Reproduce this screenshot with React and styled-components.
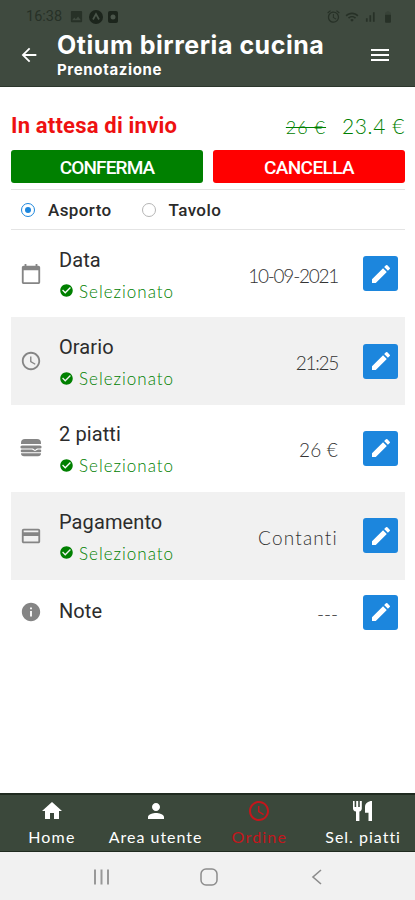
import React, { useState } from 'react';
import styled, { createGlobalStyle } from 'styled-components';
import {
  MdAccessTime,
  MdAlarm,
  MdArrowBack,
  MdBattery90,
  MdCalendarToday,
  MdCheckCircle,
  MdCreditCard,
  MdEdit,
  MdHome,
  MdImage,
  MdInfo,
  MdMenu,
  MdPerson,
  MdSignalCellularAlt,
  MdWifi,
} from 'react-icons/md';

const GlobalStyle = createGlobalStyle`
  * {
    box-sizing: border-box;
  }
  body {
    margin: 0;
    background: #fff;
    font-family: Lato, "Open Sans", sans-serif;
  }
  button {
    border: none;
    padding: 0;
    font-family: inherit;
    background: none;
  }
  svg {
    display: block;
    flex-shrink: 0;
  }
`;

const Screen = styled.div`
  display: flex;
  flex-direction: column;
  width: 100%;
  height: 900px;
  overflow: hidden;
  background: #fff;
`;

const Header = styled.header`
  height: 87px;
  background-color: #3f4a3f;
  border-bottom: 1px solid #2c372c;
`;

const StatusBar = styled.div`
  display: flex;
  align-items: center;
  justify-content: space-between;
  height: 31px;
  padding: 2px 20px 0 26px;
  color: #273127;
`;

const StatusGroup = styled.div`
  display: flex;
  align-items: center;
  gap: ${(props) => props.$gap}px;
`;

const Clock = styled.span`
  width: 38px;
  font-family: Roboto, sans-serif;
  font-size: 14.5px;
  line-height: 16px;
`;

const TitleBar = styled.div`
  display: flex;
  align-items: center;
  height: 48px;
  padding: 0 23px 0 18px;
  color: #fff;
`;

const Titles = styled.div`
  flex: 1;
  margin-left: 17px;
  font-family: Inter, sans-serif;
  font-weight: 700;
  white-space: nowrap;
`;

const Title = styled.div`
  font-size: 25px;
  line-height: 28px;
  letter-spacing: 0.53px;
`;

const Subtitle = styled.div`
  padding-top: 1px;
  font-size: 15px;
  line-height: 20px;
  letter-spacing: 0.65px;
`;

const Content = styled.main`
  flex: 1;
  padding: 25px 10px 0 11px;
`;

const Summary = styled.div`
  display: flex;
  align-items: center;
  justify-content: space-between;
  height: 28px;
  color: green;
`;

const Status = styled.div`
  font-family: Roboto, sans-serif;
  font-size: 22px;
  font-weight: 700;
  line-height: 28px;
  letter-spacing: 0.2px;
  color: #ee1111;
`;

const Prices = styled.div`
  display: flex;
  align-items: baseline;
  gap: 16px;
`;

const OldPrice = styled.span`
  font-size: 18px;
  font-weight: 300;
  letter-spacing: 1px;
  text-decoration: line-through;
`;

const Price = styled.span`
  font-size: 21px;
  font-weight: 300;
  line-height: 28px;
  letter-spacing: 0.6px;
`;

const Actions = styled.div`
  display: flex;
  gap: 10px;
  margin-top: 10px;
`;

const ActionButton = styled.button`
  flex: 1;
  height: 33px;
  border-radius: 3px;
  background-color: ${(props) => props.$color};
  color: #fff;
  font-family: Roboto, sans-serif;
  font-size: 19px;
  font-weight: 500;
  line-height: 35px;
  letter-spacing: ${(props) => props.$spacing}px;
`;

const Modes = styled.div`
  display: flex;
  align-items: center;
  height: 41px;
  margin-top: 6px;
  padding: 1px 0 0 10px;
  border-top: 1px solid #e4e4e4;
  border-bottom: 1px solid #e4e4e4;
`;

const Mode = styled.button`
  display: flex;
  align-items: center;
  gap: 13px;
  margin-right: 30px;
  color: #2a2a2a;
  font-family: Roboto, sans-serif;
  font-size: 17px;
  font-weight: 500;
  letter-spacing: 0.4px;
`;

const Radio = styled.span`
  display: flex;
  align-items: center;
  justify-content: center;
  width: 14px;
  height: 14px;
  border: 1.5px solid ${(props) => (props.$checked ? '#1c86dd' : '#b5b5b5')};
  border-radius: 50%;

  &::after {
    content: '';
    width: 6px;
    height: 6px;
    border-radius: 50%;
    background: ${(props) => (props.$checked ? '#1c86dd' : 'transparent')};
  }
`;

const Row = styled.div`
  display: flex;
  align-items: center;
  height: ${(props) => (props.$short ? 65 : 87.4)}px;
  padding: 0 7px 0 9px;
  background-color: ${(props) => (props.$shaded ? '#f1f1f1' : '#fff')};
  color: #858585;
`;

const RowText = styled.div`
  flex: 1;
  margin-left: 17px;
  padding-top: ${(props) => (props.$single ? 0 : 4)}px;
  padding-bottom: ${(props) => (props.$single ? 3 : 0)}px;
`;

const RowTitle = styled.div`
  font-family: Roboto, sans-serif;
  font-size: 20px;
  line-height: 28px;
  letter-spacing: 0.1px;
  color: #2c2c2c;
`;

const Selected = styled.div`
  display: flex;
  align-items: center;
  gap: 5px;
  margin-top: 4px;
  color: green;
  font-size: 17px;
  font-weight: 300;
  line-height: 28px;
  letter-spacing: 1px;

  svg {
    margin-bottom: 2px;
  }
`;

const Value = styled.div`
  margin-right: 25px;
  padding-top: 4px;
  color: #333;
  font-size: 19px;
  font-weight: 300;
  line-height: 26px;
  letter-spacing: ${(props) => props.$spacing || 0}px;
`;

const EditButton = styled.button`
  display: flex;
  align-items: center;
  justify-content: center;
  width: 35px;
  height: 35px;
  border-radius: 3px;
  background-color: #1c86dd;
  color: #fff;
`;

const TabBar = styled.nav`
  display: flex;
  height: 59px;
  background-color: #3b483b;
  border-top: 2px solid #1f2a1f;
  border-bottom: 1px solid #1f2a1f;
`;

const Tab = styled.button`
  display: flex;
  flex: 1;
  flex-direction: column;
  align-items: center;
  padding-top: 4px;
  color: ${(props) => (props.$active ? '#c4161c' : '#fff')};
  font-size: 16px;
  line-height: 24px;
  letter-spacing: ${(props) => props.$spacing}px;
  white-space: nowrap;

  svg {
    margin-bottom: 2px;
  }
`;

const SystemBar = styled.div`
  display: grid;
  grid-template-columns: 105px 110px 105px;
  align-items: center;
  justify-items: center;
  height: 48px;
  padding: 2px 0 0 49px;
  background-color: #f1f1f1;
`;

const BurgerIcon = () => (
  <svg width="22" height="22" viewBox="-1 -2 22 22" fill="currentColor">
    <path d="M0 5V4a4 4 0 0 1 4-4h12a4 4 0 0 1 4 4v1z" />
    <path d="M1 6.4h18a1.6 1.6 0 0 1 0 3.2h-3l-2 1.4-2-1.4H1a1.6 1.6 0 0 1 0-3.2z" />
    <path d="M1 10.6h10l3 1.4 3-1.4h2a1.2 1.2 0 0 1 0 2.6H1a1.2 1.2 0 0 1 0-2.6z" />
    <path d="M0 14.2h20v.3a3 3 0 0 1-3 2.8H3a3 3 0 0 1-3-2.8z" />
  </svg>
);

const CutleryIcon = () => (
  <svg width="22" height="24" viewBox="0 -1 22 24" fill="currentColor">
    <path d="M1 1h1.6v6h1.6V1h2v6h1.6V1h2v7.4c0 1.6-.9 2.6-2.4 3.1V21H4V11.5C2 11 1 10 1 8.4z" />
    <path d="M20 1v20h-3.5v-8.3H13V7c0-3.500 3-6 7-6z" />
  </svg>
);

const AppBadgeIcon = () => (
  <svg width="14" height="14" viewBox="0 0 14 14">
    <circle cx="7" cy="7" r="7" fill="#1c251c" />
    <path d="M4 9.5 7 4l3 5.5" fill="none" stroke="#4a554a" strokeWidth="1.7" />
  </svg>
);

const DeviceIcon = () => (
  <svg width="10" height="12" viewBox="0 0 10 12">
    <rect width="10" height="12" rx="2" fill="#1c251c" />
    <circle cx="5" cy="6" r="2.5" fill="#4a554a" />
  </svg>
);

const RecentsIcon = () => (
  <svg width="17" height="16" viewBox="0 0 17 16" stroke="#999" strokeWidth="2">
    <path d="M2 .5v15M8.500 .5v15M15 .5v15" />
  </svg>
);

const HomeKeyIcon = () => (
  <svg width="18" height="18" viewBox="0 0 18 18" fill="none" stroke="#8c8c8c" strokeWidth="1.5">
    <rect x="1" y="1" width="16" height="16" rx="5" />
  </svg>
);

const BackKeyIcon = () => (
  <svg width="12" height="16" viewBox="0 0 12 16" fill="none" stroke="#8c8c8c" strokeWidth="1.6">
    <path d="M10 1 2 8l8 7" />
  </svg>
);

const rows = [
  { title: 'Data', value: '10-09-2021', Icon: MdCalendarToday, selected: true, spacing: -1.25 },
  { title: 'Orario', value: '21:25', Icon: MdAccessTime, selected: true, spacing: -1.3 },
  { title: '2 piatti', value: '26 €', Icon: BurgerIcon, selected: true, spacing: 0.2 },
  { title: 'Pagamento', value: 'Contanti', Icon: MdCreditCard, selected: true, spacing: 1.2 },
  { title: 'Note', value: '---', Icon: MdInfo, selected: false },
];

const tabs = [
  { label: 'Home', icon: <MdHome size={24} />, spacing: 1.2 },
  { label: 'Area utente', icon: <MdPerson size={24} />, spacing: 1 },
  { label: 'Ordine', icon: <MdAccessTime size={24} />, spacing: 1.2 },
  { label: 'Sel. piatti', icon: <CutleryIcon />, spacing: 1 },
];

function App() {
  const [mode, setMode] = useState('Asporto');
  const [activeTab, setActiveTab] = useState('Ordine');

  return (
    <Screen>
      <GlobalStyle />
      <Header>
        <StatusBar>
          <StatusGroup $gap={5}>
            <Clock>16:38</Clock>
            <MdImage size={15} />
            <AppBadgeIcon />
            <DeviceIcon />
          </StatusGroup>
          <StatusGroup $gap={4}>
            <MdAlarm size={15} />
            <MdWifi size={14} />
            <MdSignalCellularAlt size={14} />
            <MdBattery90 size={14} />
          </StatusGroup>
        </StatusBar>
        <TitleBar>
          <MdArrowBack size={22} />
          <Titles>
            <Title>Otium birreria cucina</Title>
            <Subtitle>Prenotazione</Subtitle>
          </Titles>
          <MdMenu size={24} />
        </TitleBar>
      </Header>

      <Content>
        <Summary>
          <Status>In attesa di invio</Status>
          <Prices>
            <OldPrice>26 €</OldPrice>
            <Price>23.4 €</Price>
          </Prices>
        </Summary>
        <Actions>
          <ActionButton $color="#008000" $spacing={-0.85}>CONFERMA</ActionButton>
          <ActionButton $color="#ff0000" $spacing={-0.6}>CANCELLA</ActionButton>
        </Actions>
        <Modes>
          {['Asporto', 'Tavolo'].map((name) => (
            <Mode key={name} onClick={() => setMode(name)}>
              <Radio $checked={mode === name} />
              {name}
            </Mode>
          ))}
        </Modes>
        {rows.map(({ title, value, Icon, selected, spacing }, index) => (
          <Row key={title} $shaded={index % 2 === 1} $short={!selected}>
            <Icon size={22} />
            <RowText $single={!selected}>
              <RowTitle>{title}</RowTitle>
              {selected && (
                <Selected>
                  <MdCheckCircle size={15} />
                  Selezionato
                </Selected>
              )}
            </RowText>
            <Value $spacing={spacing}>{value}</Value>
            <EditButton>
              <MdEdit size={24} />
            </EditButton>
          </Row>
        ))}
      </Content>

      <TabBar>
        {tabs.map(({ label, icon, spacing }) => (
          <Tab
            key={label}
            $active={activeTab === label}
            $spacing={spacing}
            onClick={() => setActiveTab(label)}
          >
            {icon}
            {label}
          </Tab>
        ))}
      </TabBar>
      <SystemBar>
        <RecentsIcon />
        <HomeKeyIcon />
        <BackKeyIcon />
      </SystemBar>
    </Screen>
  );
}

export default App;
